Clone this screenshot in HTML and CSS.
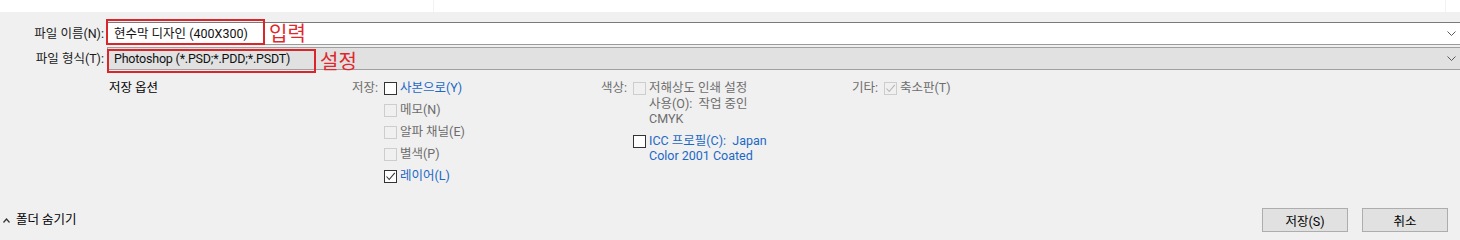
FILE: index.html
```html
<!DOCTYPE html>
<html lang="ko">
  <head>
    <meta charset="UTF-8" />
    <meta name="viewport" content="width=device-width, initial-scale=1.0" />
    <title>다른 이름으로 저장</title>
    <link rel="stylesheet" href="styles.css">
  </head>

  <body>
    <div class="dialog">
      <!-- Top strip (file list edge) -->
      <div class="top-strip">
        <div class="top-cell"></div>
        <div class="top-cell wide"></div>
      </div>

      <!-- File name / type -->
      <div class="fields">
        <div class="field-row">
          <label class="field-label" for="fileName">파일 이름(N):</label>
          <div class="combo combo-input">
            <span class="combo-text" id="fileName">현수막 디자인 (400X300)</span>
            <svg class="chevron" width="9" height="5" viewBox="0 0 9 5"><polyline points="0.5,0.5 4.5,4.5 8.5,0.5" fill="none" stroke="#5a5a5a" stroke-width="1" /></svg>
            <span class="mark mark-name"></span>
            <span class="note note-name">입력</span>
          </div>
        </div>
        <div class="field-row">
          <label class="field-label">파일 형식(T):</label>
          <div class="combo combo-select">
            <span class="combo-text">Photoshop (*.PSD;*.PDD;*.PSDT)</span>
            <svg class="chevron" width="9" height="5" viewBox="0 0 9 5"><polyline points="0.5,0.5 4.5,4.5 8.5,0.5" fill="none" stroke="#5a5a5a" stroke-width="1" /></svg>
            <span class="mark mark-type"></span>
            <span class="note note-type">설정</span>
          </div>
        </div>
      </div>

      <!-- Save options -->
      <div class="options">
        <div class="opt-title">저장 옵션</div>

        <div class="opt-group group-save">
          <div class="group-label">저장:</div>
          <ul class="check-list">
            <li class="check"><span class="box"></span><span class="link">사본으로(Y)</span></li>
            <li class="check disabled"><span class="box"></span><span>메모(N)</span></li>
            <li class="check disabled"><span class="box"></span><span>알파 채널(E)</span></li>
            <li class="check disabled"><span class="box"></span><span>별색(P)</span></li>
            <li class="check"><span class="box checked"><svg width="11" height="11" viewBox="0 0 11 11"><polyline points="1.5,5.5 4.2,8.5 9.8,1.8" fill="none" stroke="#333" stroke-width="1.1" /></svg></span><span class="link">레이어(L)</span></li>
          </ul>
        </div>

        <div class="opt-group group-color">
          <div class="group-label">색상:</div>
          <ul class="check-list">
            <li class="check multi disabled">
              <span class="box"></span>
              <span class="lines"><span class="line">저해상도 인쇄 설정</span><span class="line">사용(O):&nbsp; 작업 중인</span><span class="line">CMYK</span></span>
            </li>
            <li class="check multi icc">
              <span class="box"></span>
              <span class="lines link"><span class="line">ICC 프로필(C):&nbsp; Japan</span><span class="line">Color 2001 Coated</span></span>
            </li>
          </ul>
        </div>

        <div class="opt-group group-other">
          <div class="group-label">기타:</div>
          <ul class="check-list">
            <li class="check disabled"><span class="box checked"><svg width="11" height="11" viewBox="0 0 11 11"><polyline points="1.5,5.5 4.2,8.5 9.8,1.8" fill="none" stroke="#b5b5b5" stroke-width="1.1" /></svg></span><span>축소판(T)</span></li>
          </ul>
        </div>
      </div>

      <!-- Footer -->
      <div class="footer">
        <div class="folder-toggle">
          <svg width="7" height="5" viewBox="0 0 7 5"><polyline points="0.5,4.5 3.5,1 6.5,4.5" fill="none" stroke="#333" stroke-width="1.2" /></svg>
          <span>폴더 숨기기</span>
        </div>
        <div class="buttons">
          <button type="button" class="btn">저장(S)</button>
          <button type="button" class="btn">취소</button>
        </div>
      </div>
    </div>
  </body>
</html>
```

FILE: styles.css
```css
body {
  margin: 0;
  background-color: #f0f0f0;
  font-family: Roboto, "Noto Sans CJK KR", sans-serif;
  font-size: 12.5px;
  line-height: 1.25;
  color: #1a1a1a;
}

.dialog {
  height: 240px;
  display: flex;
  flex-direction: column;
  overflow: hidden;
}

/* Top strip */
.top-strip {
  height: 12px;
  background-color: #fff;
  display: flex;
}

.top-cell {
  width: 433px;
  border-right: 1px solid #f2f2f2;
}

.top-cell.wide {
  width: 1011px;
}

/* Fields */
.fields {
  padding-top: 10px;
  display: flex;
  flex-direction: column;
  gap: 2px;
}

.field-row {
  display: flex;
  align-items: center;
  height: 23px;
}

.field-label {
  width: 104px;
  padding-right: 3px;
  text-align: right;
  line-height: 23px;
}

.combo {
  position: relative;
  flex: 1;
  height: 21px;
  display: flex;
  align-items: center;
  border: 1px solid #8c8c8c;
  border-right: none;
  padding-left: 6px;
}

.combo-input {
  background-color: #fff;
  border-color: #7a7a7a #7a7a7a #9a9a9a;
}

.combo-select {
  background-color: #e1e1e1;
  border-color: #a0a0a0;
}

.combo-text {
  flex: 1;
  color: #111;
}

.combo-select .combo-text {
  letter-spacing: -0.2px;
}

.chevron {
  margin-right: 4px;
}

/* Red annotation marks */
.mark {
  position: absolute;
  border: 2px solid #d9262a;
}

.mark-name {
  left: -2px;
  top: -4px;
  width: 155px;
  height: 22px;
}

.mark-type {
  left: -1px;
  top: 1px;
  width: 205px;
  height: 20px;
}

.note {
  position: absolute;
  color: #e0282c;
  font-family: "Noto Sans CJK KR", sans-serif;
  font-size: 20px;
  line-height: 24px;
}

.note-name {
  left: 161px;
  top: -2px;
}

.note-type {
  left: 212px;
  top: 1px;
}

/* Options */
.options {
  display: flex;
  padding-left: 109px;
  margin-top: 7px;
}

.opt-title {
  width: 243px;
  line-height: 22px;
  color: #000;
}

.opt-group {
  display: flex;
}

.group-save {
  width: 249px;
}

.group-color {
  width: 251px;
}

.group-label {
  width: 32px;
  line-height: 22px;
  color: #6d6d6d;
}

.check-list {
  list-style-type: none;
  margin: 0;
  padding: 0;
}

.check {
  display: flex;
  align-items: center;
  gap: 3px;
  height: 22px;
  color: #6d6d6d;
}

.check.multi {
  height: auto;
  align-items: flex-start;
  padding-top: 3px;
}

.check.multi .box {
  margin-top: 2px;
}

.check.icc {
  margin-top: 3px;
}

.lines {
  display: flex;
  flex-direction: column;
}

.line {
  height: 15.5px;
  line-height: 15.5px;
  white-space: nowrap;
}

.box {
  width: 11px;
  height: 11px;
  border: 1px solid #333;
  background-color: #fff;
  display: flex;
  align-items: center;
  justify-content: center;
  flex-shrink: 0;
}

.check.disabled .box {
  border-color: #cdcdcd;
  background-color: #f0f0f0;
}

.link {
  color: #1c68c6;
}

/* Footer */
.footer {
  margin-top: auto;
  margin-bottom: 8px;
  display: flex;
  align-items: center;
  justify-content: space-between;
}

.folder-toggle {
  display: flex;
  align-items: center;
  gap: 6px;
  padding-left: 3px;
  color: #000;
}

.buttons {
  display: flex;
  gap: 14px;
  margin-right: 12px;
}

.btn {
  width: 86px;
  height: 24px;
  background-color: #e1e1e1;
  border: 1px solid #adadad;
  font-family: inherit;
  font-size: 12.5px;
  color: #000;
  padding: 0;
}
```
